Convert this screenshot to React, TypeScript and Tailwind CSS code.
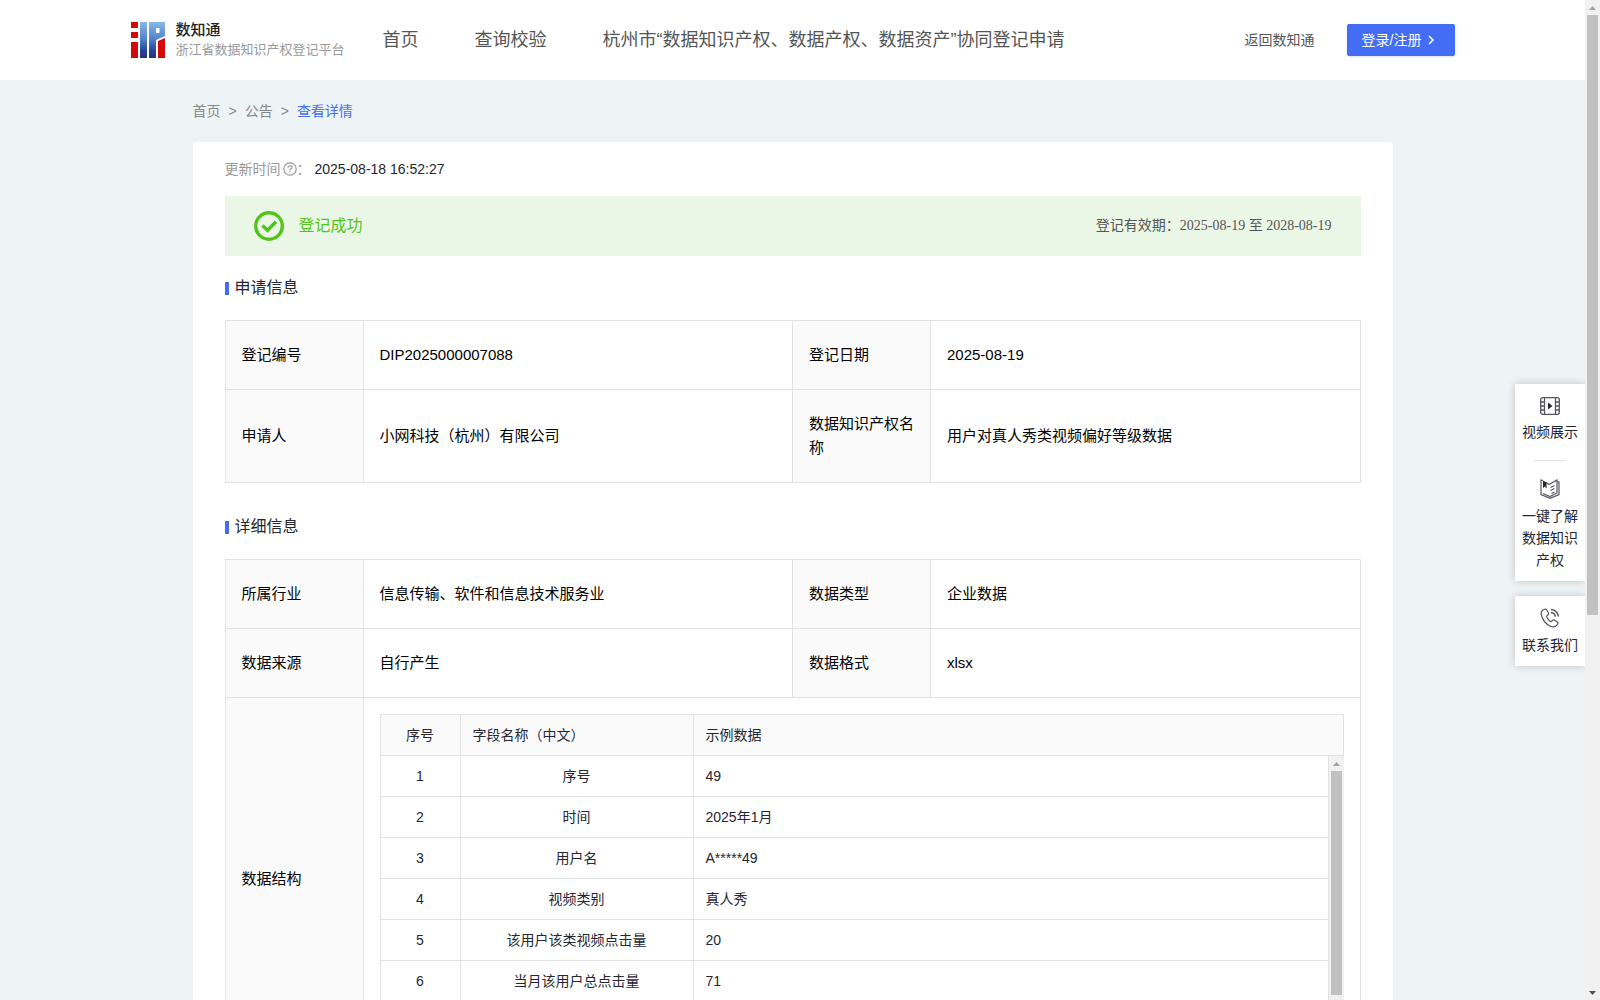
import type { ReactNode } from 'react';
import clsx from 'clsx';

const NAV = ['首页', '查询校验', '杭州市“数据知识产权、数据产权、数据资产”协同登记申请'];

const FIELDS = [
  { name: '序号', sample: '49' },
  { name: '时间', sample: '2025年1月' },
  { name: '用户名', sample: 'A*****49' },
  { name: '视频类别', sample: '真人秀' },
  { name: '该用户该类视频点击量', sample: '20' },
  { name: '当月该用户总点击量', sample: '71' },
];

function Logo() {
  return (
    <svg viewBox="0 0 34 36" className="h-9 w-[34px] shrink-0" aria-hidden="true">
      <defs>
        <linearGradient id="logo-blue" x1="0" y1="0" x2="0" y2="36" gradientUnits="userSpaceOnUse">
          <stop offset="0" stopColor="#86b8ea" />
          <stop offset="0.45" stopColor="#5585cc" />
          <stop offset="0.8" stopColor="#26439a" />
          <stop offset="1" stopColor="#22337f" />
        </linearGradient>
      </defs>
      <path d="M0 0h7v6H0zM0 10h7v6H0zM0 20h7v16H0z" fill="#d40a0a" />
      <path d="M9 0h7v36H9z" fill="url(#logo-blue)" />
      <path d="M18 0h16v14l-9 4v18h-7zM25 6v5h3.500V6z" fillRule="evenodd" fill="url(#logo-blue)" />
      <path d="M34 16v20h-7V19z" fill="#d40a0a" />
    </svg>
  );
}

function Header() {
  return (
    <header className="bg-white">
      <div className="mx-auto flex h-20 max-w-[1324px] items-center">
        <a href="#" className="flex w-56 shrink-0 items-center gap-[11px]">
          <Logo />
          <span className="flex flex-col whitespace-nowrap leading-5">
            <span className="text-[15px] font-medium text-[#222222]">数知通</span>
            <span className="text-[13px] text-[#999999]">浙江省数据知识产权登记平台</span>
          </span>
        </a>
        <nav className="flex flex-1 whitespace-nowrap text-lg text-[#555555]">
          {NAV.map((item) => (
            <a key={item} href="#" className="px-7">{item}</a>
          ))}
        </nav>
        <a href="#" className="mr-8 whitespace-nowrap text-sm text-[#555555]">返回数知通</a>
        <button className="flex h-8 w-[108px] items-center gap-1 rounded-xs bg-[#446df6] pl-[15px] text-sm text-white shadow-sm">
          登录/注册
          <svg viewBox="0 0 12 12" className="h-3 w-3" fill="none" stroke="currentColor" strokeWidth="1.5">
            <path d="M4 2l4 4-4 4" />
          </svg>
        </button>
      </div>
    </header>
  );
}

function SectionTitle({ children }: { children: ReactNode }) {
  return (
    <h2 className="flex items-center gap-[6px] text-base leading-6 text-[#252632]">
      <span className="h-[13px] w-1 bg-[#446df6]" />
      {children}
    </h2>
  );
}

function InfoTable({ children }: { children: ReactNode }) {
  return (
    <table className="w-full table-fixed border-separate border-spacing-0 border-l border-t border-[#e2e2e2] text-[15px] leading-6 text-black">
      <colgroup>
        <col className="w-[138px]" />
        <col />
        <col className="w-[138px]" />
        <col />
      </colgroup>
      <tbody>{children}</tbody>
    </table>
  );
}

function Label({ children }: { children: ReactNode }) {
  return (
    <th scope="row" className="border-b border-r border-[#e2e2e2] bg-[#fafafa] px-4 py-[22px] text-left font-normal">
      {children}
    </th>
  );
}

function Value({ children }: { children: ReactNode }) {
  return <td className="border-b border-r border-[#e2e2e2] px-4 py-[22px]">{children}</td>;
}

function FieldCols() {
  return (
    <colgroup>
      <col className="w-20" />
      <col className="w-[233px]" />
      <col />
    </colgroup>
  );
}

function Arrow({ down }: { down?: boolean }) {
  return (
    <svg viewBox="0 0 15 15" className="h-[15px] w-[15px] shrink-0" aria-hidden="true">
      {down ? <path d="M4 6h7l-3.500 4z" fill="#505050" /> : <path d="M4 10h7L7.500 6z" fill="#a3a3a3" />}
    </svg>
  );
}

function FieldTable() {
  const cell = 'border-b border-r border-[#e2e2e2] px-3 py-[9px] font-normal';
  return (
    <div className="border-l border-t border-[#e2e2e2] text-sm leading-[22px] text-[#252632]">
      <table className="w-full table-fixed border-separate border-spacing-0 bg-[#fafafa]">
        <FieldCols />
        <thead>
          <tr>
            <th className={cell}>序号</th>
            <th className={clsx(cell, 'text-left')}>字段名称（中文）</th>
            <th className={clsx(cell, 'text-left')}>示例数据</th>
          </tr>
        </thead>
      </table>
      <div className="flex h-[287px]">
        <div className="flex-1">
          <table className="w-full table-fixed border-separate border-spacing-0">
            <FieldCols />
            <tbody>
              {FIELDS.map((f, i) => (
                <tr key={f.name}>
                  <td className={clsx(cell, 'text-center')}>{i + 1}</td>
                  <td className={clsx(cell, 'text-center')}>{f.name}</td>
                  <td className={cell}>{f.sample}</td>
                </tr>
              ))}
            </tbody>
          </table>
        </div>
        <div className="flex w-[15px] flex-col items-center bg-[#f1f1f1]">
          <Arrow />
          <div className="h-[224px] w-[11px] bg-[#c1c1c1]" />
        </div>
      </div>
    </div>
  );
}

function VideoIcon() {
  return (
    <svg viewBox="0 0 20 18" className="h-[18px] w-5" fill="none" stroke="#55565e" strokeWidth="1.300">
      <rect x="0.700" y="0.700" width="18.600" height="16.600" rx="2" />
      <path d="M4.500 1v16M15.500 1v16M1 5h3.500M1 9h3.500M1 13h3.500M15.500 5H19M15.500 9H19M15.500 13H19" />
      <path d="M8 5.500v7l4.500-3.500z" fill="#252632" stroke="none" />
    </svg>
  );
}

function BookIcon() {
  return (
    <svg viewBox="0 0 20 20" className="h-5 w-5" fill="none" stroke="#55565e" strokeWidth="1.200">
      <path d="M3 1.500L1 1v14.500l9 3.800 9-3.800V3l-1.800-.5" />
      <path d="M6 3.500l3 2 8-4.500v13l-7 3.500-7-3" />
      <path d="M3 1.500v7.500l1.700-1.500L6.500 9.500v-6z" fill="#252632" stroke="none" />
      <path d="M10.500 8.500l4-2M10.500 11.500l4-2M11.500 14.500l3-1.500" />
    </svg>
  );
}

function PhoneIcon() {
  return (
    <svg viewBox="0 0 20 20" className="h-5 w-5" fill="none" stroke="#55565e" strokeWidth="1.200">
      <path d="M4 1.500C1.500 2.500.8 5 1.500 7.500c1 4 4.500 8.500 8.500 10.500 2.500 1.300 5.500 1.300 7.500-1.500.7-1 .5-1.800-.3-2.400l-2.400-1.800c-.8-.6-1.500-.6-2.200 0l-1 .9c-.6.5-1 .4-1.500 0-1.500-1.200-2.600-2.600-3.300-4.200-.3-.7-.2-1.100.4-1.500l.8-.7c.6-.6.7-1.300.3-2L6.800 2C6.100 1 5.200 1 4 1.500z" />
      <path d="M11 1.500c3.800.3 6.800 3 7.500 7M11 4.500c2.300.3 4 1.800 4.500 4" strokeWidth="1.500" />
    </svg>
  );
}

function SideTools() {
  const box = 'flex flex-col items-center bg-white px-[7px] text-center text-sm leading-[22px] text-[#252632] shadow-[0_0_8px_rgba(0,0,0,0.2)]';
  return (
    <aside className="absolute right-0 top-96 flex w-[70px] flex-col gap-[15px]">
      <div className={clsx(box, 'pb-[10px] pt-[13px]')}>
        <a href="#" className="flex flex-col items-center gap-[6px]">
          <VideoIcon />
          视频展示
        </a>
        <hr className="mb-[18px] mt-[17px] w-8 border-[#e2e2e2]" />
        <a href="#" className="flex flex-col items-center gap-[6px]">
          <BookIcon />
          一键了解数据知识产权
        </a>
      </div>
      <a href="#" className={clsx(box, 'gap-[6px] pb-[10px] pt-3')}>
        <PhoneIcon />
        联系我们
      </a>
    </aside>
  );
}

export default function App() {
  return (
    <div className="flex h-screen overflow-hidden bg-[#eef3f6] font-['Liberation_Sans','Noto_Sans_CJK_SC',sans-serif]">
      <div className="relative flex-1 overflow-hidden">
        <Header />
        <main className="mx-auto max-w-[1200px]">
          <nav className="flex gap-2 pb-5 pt-5 text-sm leading-[22px] text-[#888888]">
            <a href="#">首页</a>
            <span>&gt;</span>
            <a href="#">公告</a>
            <span>&gt;</span>
            <a href="#" className="text-[#446df6]">查看详情</a>
          </nav>
          <div className="rounded-sm bg-white px-8 pb-8 pt-4">
            <div className="flex items-center text-sm leading-[22px] text-[#999999]">
              更新时间
              <svg viewBox="0 0 14 14" className="ml-[2px] h-[14px] w-[14px]" fill="none" stroke="currentColor" strokeWidth="1.200">
                <circle cx="7" cy="7" r="6.200" />
                <path d="M5 5.700C5 4.500 5.800 3.800 7 3.800s2 .7 2 1.700c0 1.300-2 1.400-2 2.800M7 9.300v1.200" />
              </svg>
              ：
              <span className="ml-1 text-[#252632]">2025-08-18 16:52:27</span>
            </div>

            <div className="mt-4 flex h-[60px] items-center bg-[#ebf7e6] px-[29px]">
              <svg viewBox="0 0 30 30" className="h-[30px] w-[30px]" fill="none" stroke="#52c41a">
                <circle cx="15" cy="15" r="13.300" strokeWidth="3.400" />
                <path d="M8.500 14.500l5 4.800 8.500-8.500" strokeWidth="3.600" />
              </svg>
              <span className="ml-[15px] text-base text-[#52c41a]">登记成功</span>
              <span className="ml-auto font-['Liberation_Serif','Noto_Sans_CJK_SC',serif] text-sm text-[#555555]">
                登记有效期：2025-08-19 至 2028-08-19
              </span>
            </div>

            <div className="my-5">
              <SectionTitle>申请信息</SectionTitle>
            </div>
            <InfoTable>
              <tr>
                <Label>登记编号</Label>
                <Value>DIP2025000007088</Value>
                <Label>登记日期</Label>
                <Value>2025-08-19</Value>
              </tr>
              <tr>
                <Label>申请人</Label>
                <Value>小网科技（杭州）有限公司</Value>
                <Label>数据知识产权名称</Label>
                <Value>用户对真人秀类视频偏好等级数据</Value>
              </tr>
            </InfoTable>

            <div className="mb-5 mt-8">
              <SectionTitle>详细信息</SectionTitle>
            </div>
            <InfoTable>
              <tr>
                <Label>所属行业</Label>
                <Value>信息传输、软件和信息技术服务业</Value>
                <Label>数据类型</Label>
                <Value>企业数据</Value>
              </tr>
              <tr>
                <Label>数据来源</Label>
                <Value>自行产生</Value>
                <Label>数据格式</Label>
                <Value>xlsx</Value>
              </tr>
              <tr>
                <Label>数据结构</Label>
                <td colSpan={3} className="border-b border-r border-[#e2e2e2] p-4">
                  <FieldTable />
                </td>
              </tr>
            </InfoTable>
          </div>
        </main>
        <SideTools />
      </div>
      <div className="flex w-[15px] flex-col items-center bg-[#f1f1f1]">
        <Arrow />
        <div className="h-[60%] w-[11px] bg-[#c1c1c1]" />
        <div className="mt-auto">
          <Arrow down />
        </div>
      </div>
    </div>
  );
}
